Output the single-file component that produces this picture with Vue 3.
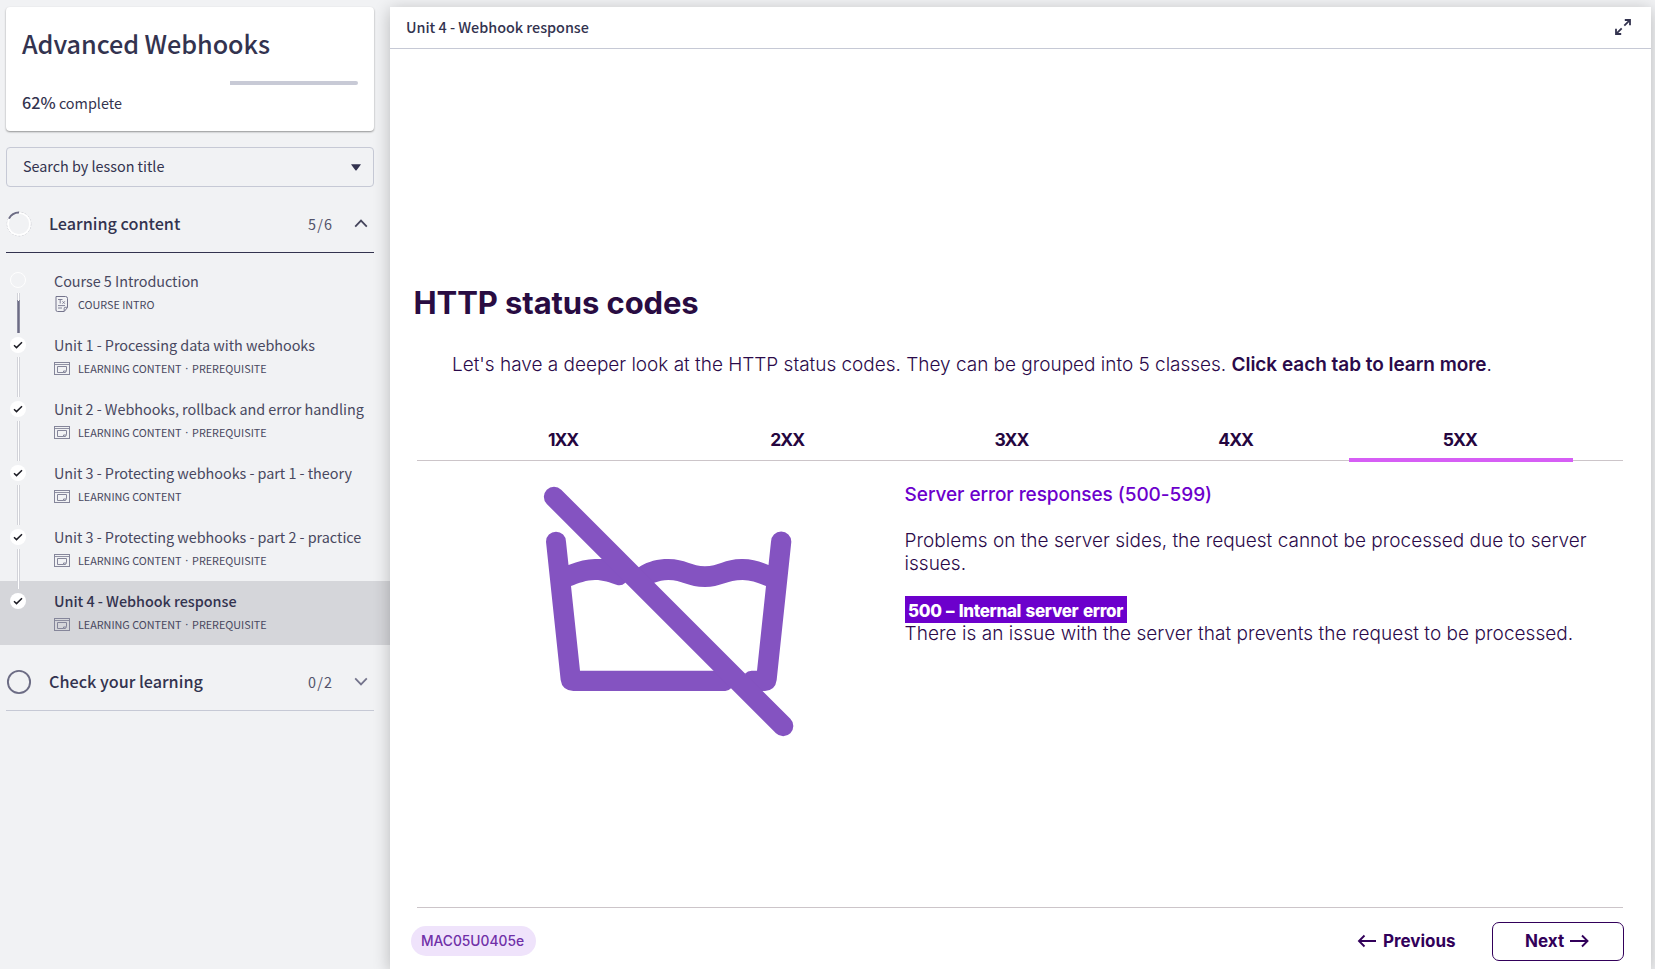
<script setup>
const lessons = [
  { title: 'Course 5 Introduction', tags: ['COURSE INTRO'], icon: 'doc', state: 'open' },
  { title: 'Unit 1 - Processing data with webhooks', tags: ['LEARNING CONTENT', 'PREREQUISITE'], icon: 'win', state: 'done' },
  { title: 'Unit 2 - Webhooks, rollback and error handling', tags: ['LEARNING CONTENT', 'PREREQUISITE'], icon: 'win', state: 'done' },
  { title: 'Unit 3 - Protecting webhooks - part 1 - theory', tags: ['LEARNING CONTENT'], icon: 'win', state: 'done' },
  { title: 'Unit 3 - Protecting webhooks - part 2 - practice', tags: ['LEARNING CONTENT', 'PREREQUISITE'], icon: 'win', state: 'done' },
  { title: 'Unit 4 - Webhook response', tags: ['LEARNING CONTENT', 'PREREQUISITE'], icon: 'win', state: 'done', current: true },
]
const tabs = ['1XX', '2XX', '3XX', '4XX', '5XX']
const activeTab = '5XX'
</script>

<template>
  <div class="app">
    <aside class="side">
      <section class="card">
        <h1>Advanced Webhooks</h1>
        <div class="progress"><i></i></div>
        <p><strong>62%</strong> complete</p>
      </section>

      <div class="search">
        <span>Search by lesson title</span>
        <svg width="10" height="7" viewBox="0 0 10 7"><path d="M.5.3h9q.6 0 .2.5L5.600 6.200q-.6.6-1.200 0L.3.8Q0 .3.5.3z" fill="#33334f" /></svg>
      </div>

      <div class="section">
        <svg class="ring" width="26" height="26" viewBox="0 0 26 26" fill="none">
          <circle cx="13" cy="13" r="11.800" stroke="#b9bac2" stroke-width=".9" stroke-dasharray="2 1.400" />
          <circle cx="13" cy="13" r="11" stroke="#fff" stroke-width="1.700" />
          <path d="M3 7.600A11.400 11.400 0 0 1 13 1.600" stroke="#6c6c84" stroke-width="2" />
        </svg>
        <h2>Learning content</h2>
        <span class="count">5/6</span>
        <svg width="14" height="9" viewBox="0 0 14 9" fill="none"><path d="M1.200 7.600 7 1.600l5.800 6" stroke="#45455c" stroke-width="1.800" /></svg>
      </div>

      <ul class="lessons">
        <li v-for="(l, i) in lessons" :key="i" :class="[l.state, { current: l.current }]">
          <div class="rail">
            <span class="dot">
              <svg v-if="l.state === 'done'" width="10" height="8" viewBox="0 0 10 8" fill="none"><path d="M1 4.300 3.500 6.600 9 1.200" stroke="#1c1c24" stroke-width="1.500" /></svg>
            </span>
            <span v-if="i < lessons.length - 1" class="line"></span>
          </div>
          <div class="info">
            <div class="title">{{ l.title }}</div>
            <div class="meta">
              <svg v-if="l.icon === 'doc'" width="16" height="16" viewBox="0 0 16 16" fill="none" stroke="#74748c">
                <path d="M2 .5h9.500q2 0 2 2v9L10.200 15.500H3.500q-1.500 0-1.500-1.500z" />
                <path d="M10.200 15.200v-3q0-.9.9-.9h2.300M4 3.500h4.500M6.200 3.500v4M8.500 5.300l2.300 2.400M10.800 5.300 8.500 7.700M4 9.600h7M4 12h4" stroke-width=".9" />
              </svg>
              <svg v-else width="16" height="16" viewBox="0 0 16 16" fill="none" stroke="#85869a">
                <rect x=".5" y="2.500" width="15" height="12" />
                <path d="M.5 4.500h15" stroke-width=".9" />
                <path d="M9.500 12.500H3.500v-6h9v4L11.500 12.500H9.500V11h2.800" />
              </svg>
              <template v-for="(t, k) in l.tags" :key="t"><i v-if="k">·</i><span>{{ t }}</span></template>
            </div>
          </div>
        </li>
      </ul>

      <div class="section second">
        <svg class="ring" width="26" height="26" viewBox="0 0 26 26" fill="none"><circle cx="13" cy="13" r="11.100" stroke="#6c6c84" stroke-width="1.900" /></svg>
        <h2>Check your learning</h2>
        <span class="count">0/2</span>
        <svg width="14" height="9" viewBox="0 0 14 9" fill="none"><path d="M1.200 1.400 7 7.400l5.800-6" stroke="#74748c" stroke-width="1.800" /></svg>
      </div>
    </aside>

    <main class="main">
      <header>
        <span>Unit 4 - Webhook response</span>
        <svg width="16" height="16" viewBox="0 0 16 16" fill="none" stroke="#33334f" stroke-width="1.800">
          <path d="M9.300 6.700 14.600 1.400M9.800 1h5.200v5.200M6.700 9.300 1.400 14.600M1 9.800v5.200h5.200" />
        </svg>
      </header>
      <div class="stage">
        <h3>HTTP status codes</h3>
        <p class="lead">Let's have a deeper look at the HTTP status codes. They can be grouped into 5 classes. <b>Click each tab to learn more</b>.</p>
        <nav>
          <span v-for="t in tabs" :key="t" :class="{ active: t === activeTab }">{{ t }}</span>
        </nav>
        <div class="panel">
          <svg width="300" height="280" viewBox="0 0 900 840" fill="#8453c1">
            <path d="M78 215A30 30 0 0 1 138 215L145.500 285C175 273 202 267 225 267L260 267 330 325 315 339Q306 348 294 345.500C268 337 250 330 225 330C200 330 176 339 153 348L180 602H640L633 655Q626 663 616 663H160Q126 661 122 630Z" />
            <path d="M814 215A30 30 0 0 0 753 215L745.500 285C722 275 697 267 668 267C615 266 595 289 555 289C517 289 495 267 445 267C412 267 384 275 362 288L345 300 390 345 403 338C415 334 430 330 445 330C485 330 505 351 555 351C600 351 622 330 668 330C692 330 715 339 738 348L711 602H695Q683 602 675 611L700 663H735Q766 661 770 630Z" />
            <path d="M102 80.500 789.500 768" stroke="#8453c1" stroke-width="61" stroke-linecap="round" />
          </svg>
          <div class="copy">
            <h4>Server error responses (500-599)</h4>
            <p>Problems on the server sides, the request cannot be processed due to server issues.</p>
            <div class="code">500 – Internal server error</div>
            <p class="desc">There is an issue with the server that prevents the request to be processed.</p>
          </div>
        </div>
        <footer>
          <span class="pill">MAC05U0405e</span>
          <span class="prev">
            <svg width="20" height="14" viewBox="0 0 20 14" fill="none" stroke="#32005a" stroke-width="1.900"><path d="M19 7H2M7.500 1.500 2 7l5.500 5.500" /></svg>
            Previous
          </span>
          <span class="next">
            Next
            <svg width="20" height="14" viewBox="0 0 20 14" fill="none" stroke="#32005a" stroke-width="1.900"><path d="M0 7h17.500M12 1.500 17.500 7 12 12.500" /></svg>
          </span>
        </footer>
      </div>
    </main>
  </div>
</template>

<style>
body { overflow: hidden; background: #f1f2f4; }
</style>

<style scoped>
* { box-sizing: border-box; margin: 0; padding: 0; }
.app { display: flex; width: 1655px; height: 969px; overflow: hidden; background: #f1f2f4; color: #33334f; font-family: "Noto Sans CJK SC", sans-serif; font-size: 14.4px; }
.side { width: 390px; flex: none; padding-top: 7px; }
svg { flex: none; display: block; }

.card { margin: 0 16px 0 6px; height: 124px; padding: 16px 16px 0; background: #fff; border-radius: 4px; box-shadow: 0 1px 2px rgba(0, 0, 0, .4); }
.card h1 { font-size: 25.2px; line-height: 40px; font-weight: 500; letter-spacing: -.05px; }
.progress { margin-top: 18px; height: 4px; display: flex; justify-content: flex-end; }
.progress i { width: 128px; background: #c8cad6; border-radius: 0 2px 2px 0; }
.card p { margin-top: 5px; line-height: 24px; }
.card strong { font-size: 16.2px; font-weight: 500; }

.search { margin: 16px 16px 0 6px; height: 40px; padding: 0 12px 3px 16px; border: 1px solid #c6c9d5; border-radius: 4px; display: flex; align-items: center; justify-content: space-between; letter-spacing: -.02px; }
.search svg { margin-top: 3px; }

.section { margin: 24px 16px 0 6px; height: 42px; padding-right: 6px; display: flex; align-items: flex-start; border-bottom: 1px solid #33334f; }
.section h2 { margin-left: 17px; flex: 1; font-size: 16.2px; line-height: 25px; font-weight: 500; }
.count { line-height: 25px; letter-spacing: 1.1px; color: #53536b; }
.section svg:last-child { margin: 8px 0 0 21px; }
.second { margin-top: 24px; border-color: #c6c9d5; }

.lessons { list-style: none; margin-top: 8px; }
.lessons li { height: 64px; display: flex; color: #484860; }
.rail { width: 16px; margin-left: 10px; display: flex; flex-direction: column; align-items: center; padding-top: 12px; position: relative; z-index: 1; }
.dot { width: 16px; height: 16px; flex: none; border-radius: 50%; background: #fff; display: flex; align-items: center; justify-content: center; }
.line { margin-top: 4px; width: 3px; height: 40px; flex: none; background: #fff; border: solid #d2d3d9; border-width: 0 1px; }
.open .rail { padding-top: 11px; }
.open .dot { background: none; border: 1px solid #fff; }
.open .line { margin-top: 5px; background: linear-gradient(#fff 8px, #6c6c84 8px); border-image: linear-gradient(#d2d3d9 8px, #8c8ca0 8px) 1; border-width: 0 1px; }
.info { margin-left: 28px; padding-top: 10px; white-space: nowrap; }
.title { line-height: 20px; letter-spacing: -.035px; }
.meta { margin-top: 5px; display: flex; align-items: center; line-height: 16px; font-size: 10.8px; letter-spacing: -.01px; }
.meta svg { margin-right: 8px; }
.meta i { width: 10.5px; text-align: center; font: 11px/16px "Noto Sans", sans-serif; }
.current { background: #d5d6da; }
.current .title { font-weight: 500; color: #33334f; }

.main { width: 1261px; margin-top: 7px; background: #fff; box-shadow: 0 3px 16px rgba(0, 0, 0, .24); display: flex; flex-direction: column; position: relative; z-index: 2; }
header { height: 42px; flex: none; padding: 0 20px 1px 16px; border-bottom: 1px solid #c6c9d5; display: flex; align-items: center; justify-content: space-between; font-weight: 500; letter-spacing: -.02px; }
header span { padding-bottom: 2px; }
.stage { flex: 1; display: flex; flex-direction: column; padding: 234px 28px 0 26.5px; font-family: Inter, sans-serif; color: #2b0a4a; font-size: 19px; }
h3 { margin-left: -3px; font-size: 31px; line-height: 40px; font-weight: 700; letter-spacing: -.1px; color: #290c42; }
.lead { margin: 30px 0 0 35.5px; line-height: 24px; font-weight: 300; letter-spacing: -.02px; white-space: nowrap; }
.lead b { font-weight: 600; letter-spacing: -.04px; }
nav { margin-top: 42px; height: 42px; padding-left: 36px; display: flex; border-bottom: 1px solid #ccc5c9; }
nav span { width: 224.2px; padding-right: 3px; text-align: center; line-height: 41px; font-size: 17.5px; font-weight: 700; letter-spacing: -1px; color: #25063f; position: relative; }
.active::after { content: ""; position: absolute; left: 0; right: 0; bottom: -2px; height: 4px; background: #d65ef5; }
.panel { padding-top: 9px; display: flex; }
.panel svg { margin-left: 103.5px; }
.copy { margin-left: 84.6px; padding-top: 13px; width: 700px; font-weight: 300; line-height: 23px; }
h4 { font-size: 19px; line-height: 24px; font-weight: 500; letter-spacing: -.06px; color: #6c00cc; }
.copy p { margin-top: 22px; }
.code { margin: 21px 0 0 .4px; width: 222px; height: 27px; padding-left: 3px; background: #6c00cc; color: #fff; font-size: 17px; line-height: 30px; font-weight: 800; letter-spacing: -.35px; word-spacing: 1.2px; white-space: nowrap; }
.copy .desc { margin-top: -1px; position: relative; letter-spacing: .045px; }
footer { margin-top: auto; height: 62px; flex: none; border-top: 1px solid #ccc5c9; display: flex; align-items: flex-start; padding-top: 14px; font-size: 17px; font-weight: 700; color: #32005a; }
.pill { margin: 4px auto 0 -5.5px; width: 125px; height: 30px; padding-right: 2px; border-radius: 15px; background: #efe3fb; color: #7030a8; font-size: 13.8px; font-weight: 500; line-height: 30px; text-align: center; }
.prev, .next { height: 39px; display: flex; align-items: center; padding-bottom: 1px; }
.prev { gap: 6px; margin-right: 36px; }
.next { width: 132px; margin-right: -.6px; gap: 6px; justify-content: center; border: 1.5px solid #32005a; border-radius: 7px; }
</style>
